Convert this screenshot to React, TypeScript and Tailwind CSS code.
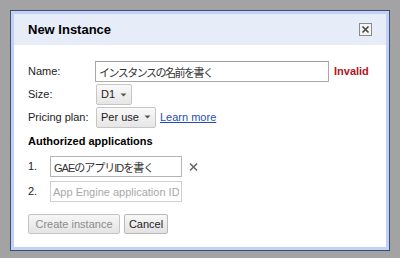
import React from "react";

const font = { fontFamily: '"Liberation Sans", Arial, "Noto Sans CJK JP", sans-serif' };

function Caret() {
  return (
    <svg width="7" height="4" viewBox="0 0 7 4" className="ml-[5px]">
      <path d="M0.5 0.5 L6.5 0.5 L3.5 3.5 Z" fill="#555" />
    </svg>
  );
}

function MenuButton({ label, width }: { label: string; width: string }) {
  return (
    <button
      className={`${width} h-[21px] flex items-center justify-center rounded-[2px] border border-[#c6c6c6] bg-gradient-to-b from-[#f9f9f9] to-[#e6e6e6] text-[11px] text-[#222]`}
    >
      {label}
      <Caret />
    </button>
  );
}

export default function App() {
  return (
    <div className="w-[400px] h-[258px] bg-[#a3a3a3] pt-[10px] pl-[10px]" style={font}>
      <div className="w-[380px] h-[241px] border border-[#3f4f7d] bg-[#c3d2f3] p-[3px]">
        <div className="h-full bg-white flex flex-col">
          {/* header */}
          <div className="h-[31px] bg-[#e6edf9] flex items-center justify-between pl-[14px] pr-[14px]">
            <span className="text-[13px] font-bold text-black">New Instance</span>
            <div className="w-[13px] h-[13px] border border-[#8a8a8a] bg-[#f4f4f4] flex items-center justify-center">
              <svg width="9" height="9" viewBox="0 0 9 9">
                <path d="M1.5 1.5 L7.5 7.5 M7.5 1.5 L1.5 7.5" stroke="#444" strokeWidth="1.6" />
              </svg>
            </div>
          </div>

          {/* body */}
          <div className="flex flex-col pl-[14px] pt-[16px] text-[11px] text-[#222]">
            <div className="flex items-center h-[21px]">
              <span className="w-[67px]">Name:</span>
              <input
                readOnly
                defaultValue="インスタンスの名前を書く"
                className="w-[234px] h-[21px] border border-[#a9a9a9] border-t-[#9a9a9a] px-[3px] text-[11px] tracking-[-1.5px] text-[#333] outline-none"
                style={font}
              />
              <span className="ml-[5px] font-bold text-[#b0141c]">Invalid</span>
            </div>

            <div className="flex items-center h-[21px] mt-[2px]">
              <span className="w-[68px]">Size:</span>
              <MenuButton label="D1" width="w-[36px]" />
            </div>

            <div className="flex items-center h-[22px] mt-[1px]">
              <span className="w-[68px]">Pricing plan:</span>
              <MenuButton label="Per use" width="w-[60px]" />
              <a className="ml-[4px] text-[#1f4fb3] underline">Learn more</a>
            </div>

            <div className="mt-[7px] font-bold text-black leading-[13px]">Authorized applications</div>

            <div className="flex items-center h-[21px] mt-[8px]">
              <span className="w-[22px]">1.</span>
              <input
                readOnly
                defaultValue="GAEのアプリIDを書く"
                className="w-[132px] h-[21px] border border-[#b5b5b5] px-[3px] text-[11px] tracking-[-1px] text-[#333] outline-none"
                style={font}
              />
              <svg width="9" height="8" viewBox="0 0 9 8" className="ml-[7px]">
                <path d="M1 0.5 L8 7.5 M8 0.5 L1 7.5" stroke="#666" strokeWidth="1.5" />
              </svg>
            </div>

            <div className="flex items-center h-[21px] mt-[4px]">
              <span className="w-[22px]">2.</span>
              <input
                readOnly
                placeholder="App Engine application ID"
                className="w-[132px] h-[21px] border border-[#d0d0d0] px-[2px] text-[11px] text-[#222] placeholder:text-[#a8a8a8] outline-none"
                style={font}
              />
            </div>

            <div className="flex items-center mt-[12px] gap-[4px]">
              <button className="w-[92px] h-[20px] rounded-[2px] border border-[#c4c4c4] bg-gradient-to-b from-[#f6f6f6] to-[#e4e4e4] text-[11px] text-[#8c8c8c]">
                Create instance
              </button>
              <button className="w-[44px] h-[20px] rounded-[2px] border border-[#b8b8b8] bg-gradient-to-b from-[#f8f8f8] to-[#e2e2e2] text-[11px] text-[#222]">
                Cancel
              </button>
            </div>
          </div>
        </div>
      </div>
    </div>
  );
}
